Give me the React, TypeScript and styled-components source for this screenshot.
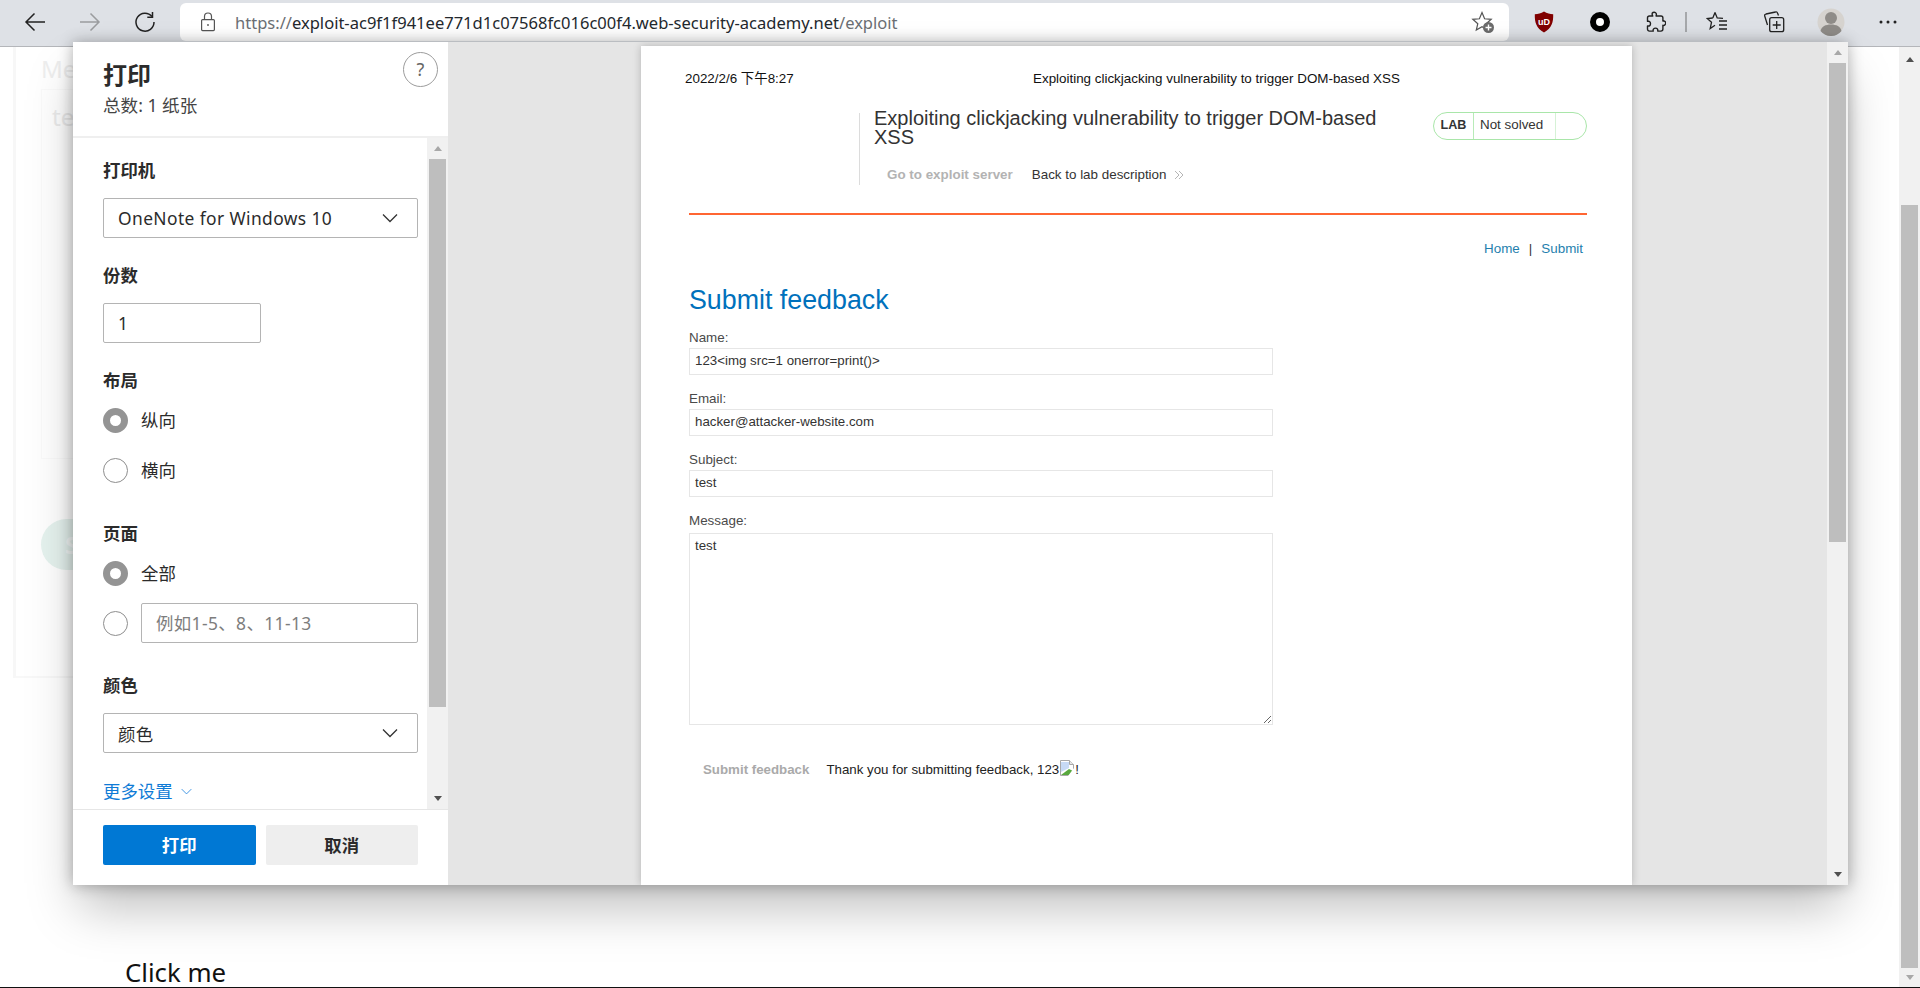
import React from "react";
import styled, { createGlobalStyle } from "styled-components";

const Global = createGlobalStyle`
  html, body { margin: 0; padding: 0; background: #fff; overflow: hidden; }
  * { box-sizing: border-box; }
`;

const UI = `"Noto Sans", "Noto Sans CJK SC", sans-serif`;
const PAGE = `"Liberation Sans", "Noto Sans CJK SC", sans-serif`;

const Screen = styled.div`
  position: relative;
  width: 1920px;
  height: 988px;
  overflow: hidden;
  display: flex;
  flex-direction: column;
  font-family: ${UI};
  border-bottom: 1px solid #111;
`;

const Toolbar = styled.header`
  height: 47px;
  flex: none;
  background: #dee1e6;
  border-bottom: 1px solid #b4b6ba;
  display: flex;
  padding: 3px 7px 5px;
`;
const NavSlot = styled.div`
  width: 55px;
  height: 38px;
  display: flex;
  align-items: center;
  justify-content: center;
  flex: none;
`;
const AddressBar = styled.div`
  width: 1329px;
  height: 38px;
  margin: 0 7px 0 8px;
  flex: none;
  background: #fff;
  border-radius: 6px;
  display: flex;
  align-items: center;
  padding: 0 14px 0 20px;
`;
const Url = styled.span`
  margin-left: 19px;
  flex: 1;
  font-size: 16.55px;
  color: #6b6f74;
  white-space: nowrap;
`;
const UrlHost = styled.span`
  color: #24292e;
`;
const ToolSlot = styled.div<{ $w?: number }>`
  width: ${(p) => p.$w ?? 56}px;
  height: 38px;
  display: flex;
  align-items: center;
  justify-content: center;
  flex: none;
`;
const ToolSep = styled.div`
  width: 2px;
  height: 20px;
  margin: 9px 1px 0 1px;
  background: #a6a8ab;
  flex: none;
`;

const Body = styled.div`
  flex: 1;
  display: flex;
  min-height: 0;
`;
const Backdrop = styled.main`
  flex: 1;
  padding-left: 13px;
  position: relative;
`;
const FadedCard = styled.div`
  width: 1000px;
  height: 631px;
  border-left: 3px solid #f7f7f7;
  border-bottom: 2px solid #f8f8f8;
  padding: 5px 0 0 25px;
`;
const FadedLabel = styled.div`
  font-size: 24px;
  line-height: 33px;
  color: #eeeeee;
`;
const FadedArea = styled.div`
  margin-top: 4px;
  height: 370px;
  width: 300px;
  border: 1px solid #fafafa;
  padding: 10px 10px;
  font-size: 24px;
  line-height: 33px;
  color: #ebebeb;
`;
const FadedPill = styled.div`
  margin-top: 60px;
  width: 200px;
  height: 51px;
  border-radius: 26px;
  background: #e6f3ef;
  color: #f6faf9;
  font-weight: 700;
  font-size: 24px;
  line-height: 51px;
  padding-left: 24px;
`;
const ClickMe = styled.div`
  position: absolute;
  left: 125px;
  bottom: 0;
  font-size: 25.8px;
  line-height: 30px;
  color: #111;
`;

const Dialog = styled.section`
  position: absolute;
  left: 73px;
  top: 42px;
  width: 1775px;
  height: 843px;
  display: flex;
  background: #fff;
  box-shadow: 0 0 14px rgba(0, 0, 0, 0.3), 0 28px 48px -6px rgba(0, 0, 0, 0.26);
`;
const Side = styled.aside`
  width: 375px;
  flex: none;
  display: flex;
  flex-direction: column;
  color: #2b2b2b;
`;
const SideHead = styled.div`
  height: 96px;
  flex: none;
  border-bottom: 2px solid #efefef;
  padding: 18px 10px 0 30px;
  display: flex;
  justify-content: space-between;
  align-items: flex-start;
`;
const SideTitle = styled.h1`
  margin: 0;
  font-size: 24px;
  line-height: 30px;
  font-weight: 700;
  color: #2b2b2b;
`;
const SideCount = styled.div`
  margin-top: 2px;
  font-size: 17.6px;
  line-height: 26px;
  color: #444;
`;
const Help = styled.div`
  width: 35px;
  height: 35px;
  margin-top: -8px;
  border: 1px solid #9c9c9c;
  border-radius: 50%;
  font-size: 18px;
  line-height: 33px;
  text-align: center;
  color: #666;
`;
const SideMiddle = styled.div`
  flex: 1;
  display: flex;
  min-height: 0;
`;
const Settings = styled.div`
  width: 354px;
  flex: none;
  padding: 20px 9px 0 30px;
`;
const FieldLabel = styled.div<{ $top?: number }>`
  margin-top: ${(p) => p.$top ?? 25}px;
  margin-bottom: 16px;
  font-size: 17.4px;
  line-height: 24px;
  font-weight: 700;
  color: #2b2b2b;
`;
const Dropdown = styled.div`
  height: 40px;
  border: 1px solid #b4b4b4;
  border-radius: 2px;
  padding: 0 19px 0 14px;
  display: flex;
  align-items: center;
  justify-content: space-between;
  font-size: 17.4px;
  letter-spacing: 0.4px;
  color: #2b2b2b;
`;
const NumberBox = styled.input`
  display: block;
  width: 158px;
  height: 40px;
  border: 1px solid #b4b4b4;
  border-radius: 2px;
  padding: 0 14px;
  font: 17.4px ${UI};
  color: #2b2b2b;
  outline: none;
`;
const RadioRow = styled.div<{ $top?: number }>`
  margin-top: ${(p) => p.$top ?? 0}px;
  display: flex;
  align-items: center;
  gap: 13px;
  font-size: 17.4px;
  line-height: 25px;
  color: #2b2b2b;
`;
const Radio = styled.span<{ $on?: boolean }>`
  width: 25px;
  height: 25px;
  flex: none;
  border-radius: 50%;
  background: #fff;
  border: ${(p) => (p.$on ? "7px solid #949494" : "1px solid #8e8e8e")};
`;
const RangeBox = styled.input`
  flex: 1;
  width: 0;
  min-width: 0;
  height: 40px;
  border: 1px solid #b4b4b4;
  border-radius: 2px;
  padding: 0 14px;
  font: 17.4px ${UI};
  letter-spacing: 0.4px;
  outline: none;
  &::placeholder { color: #7d7d7d; opacity: 1; }
`;
const MoreLink = styled.div`
  margin-top: 26px;
  display: flex;
  align-items: center;
  gap: 8px;
  font-size: 17.4px;
  line-height: 24px;
  color: #0f7bd6;
`;
const SideFoot = styled.div`
  height: 76px;
  flex: none;
  border-top: 1px solid #e6e6e6;
  padding: 15px 30px 0;
  display: flex;
  gap: 10px;
`;
const Btn = styled.div<{ $primary?: boolean }>`
  flex: 1;
  height: 40px;
  border-radius: 2px;
  background: ${(p) => (p.$primary ? "#0078d4" : "#eeeeee")};
  color: ${(p) => (p.$primary ? "#fff" : "#2b2b2b")};
  font-size: 17.4px;
  font-weight: 700;
  line-height: 40px;
  text-align: center;
`;

const Bar = styled.div`
  width: 21px;
  flex: none;
  background: #f1f1f1;
  padding: 0 2px;
  display: flex;
  flex-direction: column;
`;
const ArrowBox = styled.div<{ $h?: number }>`
  height: ${(p) => p.$h ?? 21}px;
  flex: none;
  display: flex;
  align-items: center;
  justify-content: center;
`;
const Tri = styled.div<{ $down?: boolean; $dim?: boolean }>`
  width: 0;
  height: 0;
  border-left: 4.5px solid transparent;
  border-right: 4.5px solid transparent;
  ${(p) => (p.$down ? "border-top" : "border-bottom")}: 5px solid ${(p) => (p.$dim ? "#a8a8a8" : "#505050")};
`;
const Track = styled.div<{ $h: number }>`
  height: ${(p) => p.$h}px;
  flex: none;
`;
const Thumb = styled.div<{ $h: number }>`
  height: ${(p) => p.$h}px;
  flex: none;
  background: #bebebe;
`;
const Spacer = styled.div`
  flex: 1;
`;

const Preview = styled.div`
  flex: 1;
  display: flex;
  background: #e5e5e5;
  min-width: 0;
`;
const PreviewScroll = styled.div`
  flex: 1;
  padding: 4px 0 0 193px;
  overflow: hidden;
`;
const Sheet = styled.article`
  width: 991px;
  height: 839px;
  background: #fff;
  box-shadow: 0 0 8px rgba(0, 0, 0, 0.22);
  padding: 25px 45px 0 48px;
  font-family: ${PAGE};
  font-size: 13.4px;
  color: #333;
`;
const PrintHead = styled.div`
  display: flex;
  margin-left: -4px;
  height: 16px;
  line-height: 16px;
  color: #111;
`;
const PrintDate = styled.div`
  width: 348px;
`;
const PrintTitle = styled.div``;
const LabHead = styled.div`
  margin-top: 25px;
  height: 73px;
  display: flex;
`;
const LabLogoSpace = styled.div`
  width: 170px;
  flex: none;
`;
const LabInfo = styled.div`
  width: 574px;
  flex: none;
  border-left: 1px solid #dcdcdc;
  padding-left: 14px;
  margin-top: 1px;
`;
const LabTitle = styled.h2`
  margin: -4px 0 0;
  max-width: 520px;
  font-size: 20px;
  line-height: 19px;
  font-weight: 400;
  color: #333;
`;
const LabNav = styled.div`
  margin-top: 20px;
  padding-left: 13px;
  display: flex;
  align-items: center;
  line-height: 16px;
`;
const GrayLink = styled.span`
  font-weight: 700;
  color: #b3b3b3;
  margin-right: 19px;
`;
const Badge = styled.div`
  width: 154px;
  height: 28px;
  flex: none;
  border: 1px solid #a9e6a9;
  border-radius: 14px;
  display: flex;
  line-height: 24px;
  overflow: hidden;
`;
const BadgeLab = styled.div`
  width: 40px;
  text-align: center;
  font-size: 12.6px;
  font-weight: 700;
  color: #333;
  border-right: 1px solid #b8ebb8;
`;
const BadgeState = styled.div`
  width: 82px;
  padding-left: 6px;
  border-right: 1px solid #d6f2d6;
  color: #333;
`;
const OrangeRule = styled.hr`
  margin: 28px 0 0;
  height: 2px;
  border: 0;
  background: #ff6633;
`;
const TopNav = styled.div`
  margin-top: 25px;
  padding-right: 4px;
  line-height: 17px;
  display: flex;
  justify-content: flex-end;
  gap: 9px;
`;
const NavLink = styled.span`
  color: #1f7fae;
`;
const Heading = styled.h1`
  margin: 28px 0 14px;
  font-size: 26.8px;
  line-height: 30px;
  font-weight: 400;
  color: #0071bc;
`;
const FormGroup = styled.div`
  width: 584px;
  margin-bottom: 15px;
`;
const FormLabel = styled.div<{ $h?: number }>`
  height: ${(p) => p.$h ?? 19}px;
  line-height: 18px;
  color: #4a4a4a;
`;
const TextField = styled.input`
  display: block;
  width: 100%;
  height: 27px;
  border: 1px solid #e6e6e6;
  padding: 0 4px 2px 5px;
  font: 13.3px ${PAGE};
  color: #333;
  outline: none;
`;
const TextBlock = styled.textarea`
  display: block;
  width: 100%;
  height: 192px;
  border: 1px solid #e6e6e6;
  padding: 4px 5px;
  font: 13.3px ${PAGE};
  color: #333;
  outline: none;
  overflow: hidden;
`;
const ResultRow = styled.div`
  margin-top: 36px;
  padding-left: 14px;
  display: flex;
  align-items: center;
  font-size: 13.3px;
  line-height: 17px;
`;
const ResultBtn = styled.span`
  font-weight: 700;
  color: #aaa;
  margin-right: 17px;
`;
const Result = styled.span`
  display: inline-flex;
  align-items: center;
  color: #222;
`;

const Chevron = ({ size = 16, color = "#333" }: { size?: number; color?: string }) => (
  <svg width={size} height={size} viewBox="0 0 16 16" fill="none" stroke={color} strokeWidth="1.3">
    <path d="M1 4.5 8 11.5 15 4.5" />
  </svg>
);

const DoubleChevron = () => (
  <svg width="10" height="10" viewBox="0 0 10 10" fill="none" stroke="#b5b5b5" strokeWidth="1" style={{ marginLeft: 7 }}>
    <path d="M1 1l4 4-4 4M5 1l4 4-4 4" />
  </svg>
);

const BrokenImage = () => (
  <svg width="16" height="16" viewBox="0 0 16 16" style={{ marginTop: -4 }}>
    <path d="M1.5.5h9l4 4v11h-13z" fill="#fff" stroke="#a8a8a8" />
    <path d="M10.5.5v4h4" fill="#e8e8e8" stroke="#a8a8a8" />
    <path d="M2 2h8v6l-8 4z" fill="#c7daf5" />
    <path d="M2 15l8-6 4 2v4z" fill="#58a83e" />
    <path d="M9 16l6-8v8z" fill="#fff" />
  </svg>
);

const Icon = {
  Back: () => (
    <svg width="22" height="22" viewBox="0 0 22 22" fill="none" stroke="#222" strokeWidth="1.5">
      <path d="M21 11H2M10.5 2.5 2 11l8.500 8.500" />
    </svg>
  ),
  Forward: () => (
    <svg width="22" height="22" viewBox="0 0 22 22" fill="none" stroke="#9a9c9f" strokeWidth="1.5">
      <path d="M1 11h19M11.500 2.500 20 11l-8.500 8.500" />
    </svg>
  ),
  Reload: () => (
    <svg width="22" height="22" viewBox="0 0 22 22" fill="none" stroke="#222" strokeWidth="1.5">
      <path d="M18 5.500A9 9 0 1 0 20 11" />
      <path d="M18.500 1v5.200h-5.200" />
    </svg>
  ),
  Lock: () => (
    <svg width="16" height="20" viewBox="0 0 16 20" fill="none" stroke="#555" strokeWidth="1.2">
      <rect x="1.600" y="7.600" width="12.800" height="11" rx="1" />
      <path d="M4.500 7.500V4.500a3.500 3.500 0 0 1 7 0v3" />
      <circle cx="8" cy="13" r="0.900" fill="#555" stroke="none" />
    </svg>
  ),
  StarPlus: () => (
    <svg width="24" height="24" viewBox="0 0 24 24">
      <path d="M11 2.500l2.600 6.300 6.600.5-5 4.400 1.500 6.400L11 16.700 5.300 20.100l1.500-6.400-5-4.400 6.600-.5z" fill="none" stroke="#555" strokeWidth="1.200" />
      <circle cx="17.500" cy="17.500" r="5.500" fill="#6b6b6b" />
      <path d="M17.500 14.500v6M14.500 17.500h6" stroke="#fff" strokeWidth="1.400" />
    </svg>
  ),
  UBlock: () => (
    <svg width="20" height="22" viewBox="0 0 20 22">
      <path d="M10 .5C7 2.500 4 3 .8 3.200c-.2 8 1.500 14 9.200 18.300 7.700-4.300 9.400-10.300 9.200-18.300C16 3 13 2.500 10 .5z" fill="#800000" />
      <text x="10" y="13.500" textAnchor="middle" fontSize="9" fontWeight="700" fill="#fff" fontFamily="Liberation Sans, sans-serif">uD</text>
    </svg>
  ),
  Ring: () => (
    <svg width="22" height="22" viewBox="0 0 22 22">
      <circle cx="11" cy="11" r="7" fill="#fff" stroke="#000" strokeWidth="6" />
    </svg>
  ),
  Puzzle: () => (
    <svg width="20" height="22" viewBox="0 0 20 22" fill="none" stroke="#222" strokeWidth="1.400" strokeLinejoin="round">
      <path d="M7 1.500c2-.8 3.800.6 3.300 2.500l-.2 1h4.900c1.200 0 1.900.8 1.900 1.900v3.200c2.200-.6 3.200 1.200 2.500 3-.5 1.200-1.500 1.500-2.500 1.200v3.800c0 1.100-.8 2-2 2h-3.200c.4-2-.6-3-2.200-3s-2.700 1-2.300 3H3.500c-1.200 0-2-.9-2-2v-3.200c2 .5 3-.6 3-2.200s-1-2.800-3-2.300V6.900C1.500 5.800 2.300 5 3.500 5h3.300C5.900 3.500 5.800 2 7 1.500z" />
    </svg>
  ),
  Favorites: () => (
    <svg width="22" height="22" viewBox="0 0 22 22" fill="none" stroke="#222" strokeWidth="1.300">
      <path d="M9 1.500l2.200 5.500 5.800.4" />
      <path d="M6.800 7 1.200 7.500l4.300 3.800-1.300 6.200L9 14.300" />
      <path d="M6.800 7 9 1.500M13 10h8M13 14h8M13 18h8" />
    </svg>
  ),
  Collections: () => (
    <svg width="22" height="24" viewBox="0 0 22 24" fill="none" stroke="#222" strokeWidth="1.300">
      <rect x="6.700" y="7.700" width="14" height="14" rx="2" />
      <path d="M13.700 11v8M9.700 15h8" />
      <path d="M15.500 5.500 14.500 3c-.3-1-1.200-1.300-2-1L3 4c-1 .3-1.600 1-1.300 2l2.800 9" />
    </svg>
  ),
  Avatar: () => (
    <svg width="28" height="28" viewBox="0 0 28 28">
      <circle cx="14" cy="14" r="13.500" fill="#d6d3cf" />
      <circle cx="14" cy="10" r="6" fill="#8f8c88" />
      <path d="M3.500 23c1-4.500 5-6.500 10.500-6.500S23.500 18.500 24.500 23a13.500 13.500 0 0 1-21 0z" fill="#8f8c88" />
    </svg>
  ),
  Dots: () => (
    <svg width="18" height="4" viewBox="0 0 18 4" fill="#222">
      <circle cx="2" cy="2" r="1.500" />
      <circle cx="9" cy="2" r="1.500" />
      <circle cx="16" cy="2" r="1.500" />
    </svg>
  ),
};

type ScrollProps = { head?: number; foot?: number; offset?: number; thumb: number; dimUp?: boolean; dimDown?: boolean };

const Scroll = ({ head, foot, offset = 0, thumb, dimUp, dimDown }: ScrollProps) => (
  <Bar>
    <ArrowBox $h={head}>
      <Tri $dim={dimUp} />
    </ArrowBox>
    <Track $h={offset} />
    <Thumb $h={thumb} />
    <Spacer />
    <ArrowBox $h={foot}>
      <Tri $down $dim={dimDown} />
    </ArrowBox>
  </Bar>
);

export default function App() {
  return (
    <Screen>
      <Global />
      <Toolbar>
        <NavSlot><Icon.Back /></NavSlot>
        <NavSlot><Icon.Forward /></NavSlot>
        <NavSlot><Icon.Reload /></NavSlot>
        <AddressBar>
          <Icon.Lock />
          <Url>
            https://<UrlHost>exploit-ac9f1f941ee771d1c07568fc016c00f4.web-security-academy.net</UrlHost>/exploit
          </Url>
          <Icon.StarPlus />
        </AddressBar>
        <ToolSlot><Icon.UBlock /></ToolSlot>
        <ToolSlot><Icon.Ring /></ToolSlot>
        <ToolSlot><Icon.Puzzle /></ToolSlot>
        <ToolSep />
        <ToolSlot $w={57}><Icon.Favorites /></ToolSlot>
        <ToolSlot $w={57}><Icon.Collections /></ToolSlot>
        <ToolSlot $w={57}><Icon.Avatar /></ToolSlot>
        <ToolSlot $w={57}><Icon.Dots /></ToolSlot>
      </Toolbar>

      <Body>
        <Backdrop>
          <FadedCard>
            <FadedLabel>Me</FadedLabel>
            <FadedArea>te</FadedArea>
            <FadedPill>S</FadedPill>
          </FadedCard>
          <ClickMe>Click me</ClickMe>
        </Backdrop>
        <Scroll head={24} offset={134} thumb={763} foot={19} dimDown />
      </Body>

      <Dialog>
        <Side>
          <SideHead>
            <div>
              <SideTitle>打印</SideTitle>
              <SideCount>总数: 1 纸张</SideCount>
            </div>
            <Help>?</Help>
          </SideHead>
          <SideMiddle>
            <Settings>
              <FieldLabel $top={0}>打印机</FieldLabel>
              <Dropdown>OneNote for Windows 10 <Chevron /></Dropdown>
              <FieldLabel>份数</FieldLabel>
              <NumberBox defaultValue="1" readOnly />
              <FieldLabel>布局</FieldLabel>
              <RadioRow><Radio $on />纵向</RadioRow>
              <RadioRow $top={25}><Radio />横向</RadioRow>
              <FieldLabel $top={38}>页面</FieldLabel>
              <RadioRow><Radio $on />全部</RadioRow>
              <RadioRow $top={17}><Radio /><RangeBox placeholder="例如1-5、8、11-13" readOnly /></RadioRow>
              <FieldLabel $top={30}>颜色</FieldLabel>
              <Dropdown>颜色 <Chevron /></Dropdown>
              <MoreLink>更多设置 <Chevron size={11} color="#2f8be0" /></MoreLink>
            </Settings>
            <Scroll thumb={548} dimUp />
          </SideMiddle>
          <SideFoot>
            <Btn $primary>打印</Btn>
            <Btn>取消</Btn>
          </SideFoot>
        </Side>

        <Preview>
          <PreviewScroll>
            <Sheet>
              <PrintHead>
                <PrintDate>2022/2/6 下午8:27</PrintDate>
                <PrintTitle>Exploiting clickjacking vulnerability to trigger DOM-based XSS</PrintTitle>
              </PrintHead>
              <LabHead>
                <LabLogoSpace />
                <LabInfo>
                  <LabTitle>Exploiting clickjacking vulnerability to trigger DOM-based XSS</LabTitle>
                  <LabNav>
                    <GrayLink>Go to exploit server</GrayLink>
                    Back to lab description
                    <DoubleChevron />
                  </LabNav>
                </LabInfo>
                <Badge>
                  <BadgeLab>LAB</BadgeLab>
                  <BadgeState>Not solved</BadgeState>
                </Badge>
              </LabHead>
              <OrangeRule />
              <TopNav>
                <NavLink>Home</NavLink>
                <span>|</span>
                <NavLink>Submit</NavLink>
              </TopNav>
              <Heading>Submit feedback</Heading>
              <FormGroup>
                <FormLabel>Name:</FormLabel>
                <TextField defaultValue="123<img src=1 onerror=print()>" readOnly />
              </FormGroup>
              <FormGroup>
                <FormLabel>Email:</FormLabel>
                <TextField defaultValue="hacker@attacker-website.com" readOnly />
              </FormGroup>
              <FormGroup>
                <FormLabel>Subject:</FormLabel>
                <TextField defaultValue="test" readOnly />
              </FormGroup>
              <FormGroup>
                <FormLabel $h={21}>Message:</FormLabel>
                <TextBlock defaultValue="test" readOnly />
              </FormGroup>
              <ResultRow>
                <ResultBtn>Submit feedback</ResultBtn>
                <Result>Thank you for submitting feedback, 123<BrokenImage />!</Result>
              </ResultRow>
            </Sheet>
          </PreviewScroll>
          <Scroll thumb={479} dimUp />
        </Preview>
      </Dialog>
    </Screen>
  );
}
